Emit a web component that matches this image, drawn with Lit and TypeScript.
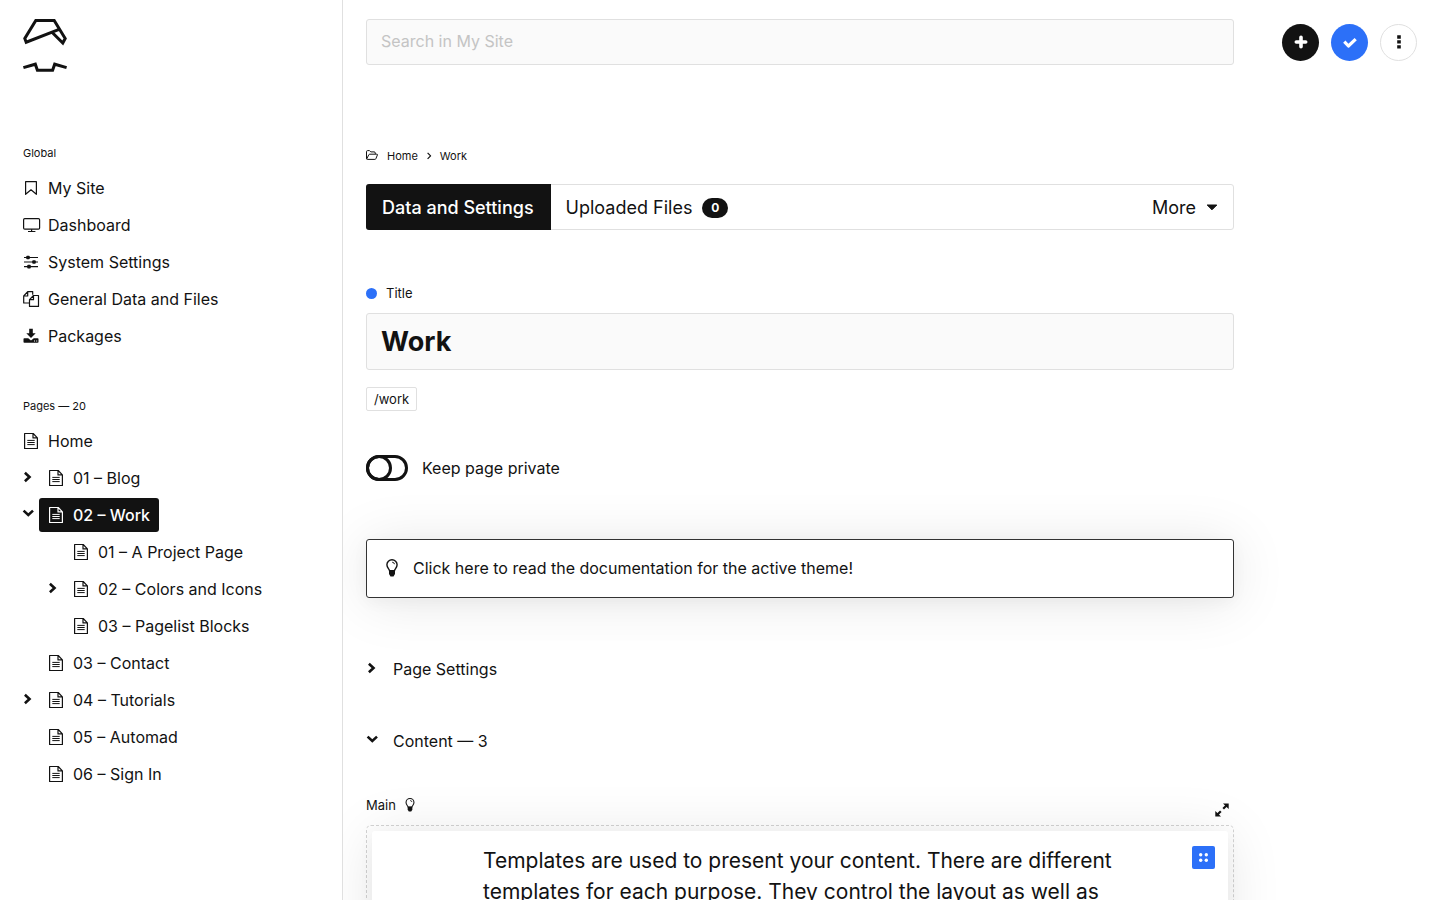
import { LitElement, css, html, svg, nothing } from "lit";
import type { SVGTemplateResult, TemplateResult } from "lit";
import { customElement, state } from "lit/decorators.js";
import { classMap } from "lit/directives/class-map.js";

interface PageNode {
  label: string;
  active?: boolean;
  collapsed?: boolean;
  children?: PageNode[];
}

const icon = (w: number, h: number, body: SVGTemplateResult) => html`
  <svg width=${w} height=${h} viewBox="0 0 ${w} ${h}" fill="none" stroke="currentColor"
    stroke-linejoin="round" aria-hidden="true">${body}</svg>`;

const icons = {
  logo: () => icon(44, 53, svg`
    <g stroke-width="3" stroke-linejoin="miter">
      <path d="M28.500 12.800 L39.800 24 L42.200 19.500 L31.200 1.500 H12.800 L1.800 19.500 L3.200 23.200 L36.800 10.200"/>
      <path d="M.4 48.600 L12.300 45.200 L14.400 51.300 H29.600 L31.700 45.200 L43.600 48.600"/>
    </g>`),
  bookmark: () => icon(16, 16, svg`<path d="M2.600 1.700h10.800v12.600L8 9.800l-5.400 4.500z" stroke-width="1.200"/>`),
  monitor: () => icon(18, 16, svg`
    <rect x=".6" y="1.600" width="16" height="10.600" rx="1.200" stroke-width="1.200"/><path d="M8.600 12.200v2M5 14.500h7.400" stroke-width="1.200"/>`),
  sliders: () => icon(16, 16, svg`
    <path d="M1 3.500h14M1 8h14M1 12.600h14" stroke-width="1.200"/>
    <g fill="currentColor" stroke="none"><rect x="3.200" y="1.700" width="3.600" height="3.600" rx="1"/>
    <rect x="9.200" y="6.200" width="3.600" height="3.600" rx="1"/><rect x="4.200" y="10.800" width="3.600" height="3.600" rx="1"/></g>`),
  files: () => icon(16, 16, svg`
    <path d="M6 12H.7V5L4.700.6h5v3.200M4.700.6V5H.7" stroke-width="1.200"/>
    <path d="M6.500 15.400V8.700l4-4.200h5v10.900zM10.500 4.500v4.200h-4" stroke-width="1.200"/>`),
  download: () => icon(16, 16, svg`
    <g fill="currentColor" stroke="none">
      <path d="M6.200.8h3.600v4.500h2.900L8 9.900 3.300 5.300h2.900z"/>
      <path fill-rule="evenodd" d="M1.300 10.200h3.900L8 12.600l2.800-2.400h3.900q.8 0 .8.800v3q0 .8-.8.800H1.300q-.8 0-.8-.8v-3q0-.8.8-.8zM11 12.600v1h1v-1zM13.200 12.600v1h1v-1z"/>
    </g>`),
  page: () => icon(16, 18, svg`
    <path d="M1.600 1.500h8.600l4.200 4.300v10.700H1.600zM10 1.600v4.300h4.300" stroke-width="1.200"/>
    <path d="M4.300 8.400h7.400M4.300 10.500h7.400M4.300 12.600h7.400"/>`),
  right: () => icon(12, 14, svg`<path d="M1.900 1.800 6.500 6l-4.600 4.200" stroke-width="2.600" stroke-linejoin="miter"/>`),
  down: () => icon(12, 14, svg`<path d="M.6 2.600 5.300 6.900l4.700-4.300" stroke-width="2.600" stroke-linejoin="miter"/>`),
  plus: () => icon(14, 14, svg`<path d="M7 2.300v9.400M2.300 7h9.400" stroke-width="3.600" stroke-linecap="round"/>`),
  check: () => icon(16, 14, svg`<path d="m2.300 6.700 4.100 4.300 7.300-6.900" stroke-width="3.200"/>`),
  dots: () => icon(4, 14, svg`<path d="M.2 2h3.600M.2 6.900h3.600M.2 11.800h3.600" stroke-width="3.300"/>`),
  folder: () => icon(12, 12, svg`
    <path d="M.5 8.700V1.700Q.5.600 1.600.600h1.900l1.300 1.300h3.300q1.200 0 1.200 1.200v.9M.7 9l2-4.100q.3-.7 1-.7h7.100q.9 0 .6.8L9.900 8.700q-.3.700-1 .7H1.300q-.8 0-.8-.8"/>`),
  crumb: () => icon(4, 8, svg`<path d="m.6.800 3 3-3 3" stroke-width="1.200"/>`),
  caret: () => icon(12, 7, svg`<path d="M1.200 1h9.600L6 5.800z" fill="currentColor" stroke-width="1"/>`),
  bulb: (w: number, h: number) => html`
    <svg width=${w} height=${h} viewBox="0 0 12 18" fill="none" stroke="currentColor" aria-hidden="true">
      <path d="M3.500 11.600C3.200 9.800.9 8.800.9 5.800a5.100 5.100 0 0 1 10.200 0c0 3-2.300 4-2.600 5.800z" stroke-width="1.400"/>
      <path d="M6.200 3.200q2 .1 2.300 2"/>
      <path d="M3 11.300h6v3.800L7.500 17.500h-3L3 15.100z" fill="currentColor" stroke="none"/>
    </svg>`,
  expand: () => icon(14, 14, svg`
    <path d="M2.500 11.500 5.800 8.200M8.200 5.800l3.300-3.300" stroke-width="2.200"/>
    <path d="M8 .4h5.700v5.700zM.3 7.900v5.700H6z" fill="currentColor" stroke="none"/>`),
  grip: () => icon(11, 11, svg`
    <g fill="currentColor" stroke="none"><circle cx="2.700" cy="2.700" r="1.700"/><circle cx="8.300" cy="2.700" r="1.700"/>
    <circle cx="2.700" cy="8.300" r="1.700"/><circle cx="8.300" cy="8.300" r="1.700"/></g>`),
};

const globalLinks: [string, () => TemplateResult][] = [
  ["My Site", icons.bookmark],
  ["Dashboard", icons.monitor],
  ["System Settings", icons.sliders],
  ["General Data and Files", icons.files],
  ["Packages", icons.download],
];

const pages: PageNode[] = [
  { label: "01 – Blog", collapsed: true, children: [] },
  {
    label: "02 – Work",
    active: true,
    children: [
      { label: "01 – A Project Page" },
      { label: "02 – Colors and Icons", collapsed: true, children: [] },
      { label: "03 – Pagelist Blocks" },
    ],
  },
  { label: "03 – Contact" },
  { label: "04 – Tutorials", collapsed: true, children: [] },
  { label: "05 – Automad" },
  { label: "06 – Sign In" },
];

const base = css`
  *, *::before, *::after { box-sizing: border-box; }
  svg { display: block; flex: none; overflow: visible; }
  a { color: inherit; text-decoration: none; }
  button, input { font: inherit; color: inherit; margin: 0; }
  button { background: none; border: 0; padding: 0; cursor: pointer; }
  button, input { font-optical-sizing: none; }
  ul, ol { list-style: none; margin: 0; padding: 0; }
`;

@customElement("side-nav")
class SideNav extends LitElement {
  static styles = [base, css`
    :host { display: block; padding: 19px 14px; border-right: 1px solid #e0e0e0; overflow: hidden; }
    .logo { display: block; width: max-content; margin: 0 9px 73px; }
    .heading { margin: 0 9px 10px; font-size: 11px; line-height: 16px; font-weight: 400; }
    .section + .section { margin-top: 45px; }
    .list { display: flex; flex-direction: column; gap: 3px; }
    .row { display: flex; align-items: center; height: 34px; }
    .tree { padding-left: 9px; }
    .sub { padding-left: 25px; padding-top: 3px; }
    .toggle, .spacer { width: 16px; height: 16px; flex: none; }
    .toggle { display: flex; align-items: center; }
    .link { display: flex; align-items: center; gap: 9px; height: 34px; padding: 0 9px; border-radius: 3px; white-space: nowrap; }
    .glyph { display: flex; width: 16px; }
    .active { background: #121212; color: #fff; font-weight: 500; }
  `];

  private node(page: PageNode): TemplateResult {
    return html`<li>
      <div class="row">
        ${page.children
          ? html`<button class="toggle" aria-label="Toggle ${page.label}" aria-expanded=${page.collapsed ? "false" : "true"}>
              ${page.collapsed ? icons.right() : icons.down()}</button>`
          : html`<span class="spacer"></span>`}
        <a href="#" class=${classMap({ link: true, active: !!page.active })}>
          <span class="glyph">${icons.page()}</span>${page.label}</a>
      </div>
      ${page.children?.length
        ? html`<ul class="list sub">${page.children.map((c) => this.node(c))}</ul>`
        : nothing}
    </li>`;
  }

  render() {
    return html`
      <a class="logo" href="#" aria-label="Automad">${icons.logo()}</a>
      <nav class="section">
        <h2 class="heading">Global</h2>
        <ul class="list">
          ${globalLinks.map(([label, glyph]) => html`
            <li><a class="link" href="#"><span class="glyph">${glyph()}</span>${label}</a></li>`)}
        </ul>
      </nav>
      <nav class="section">
        <h2 class="heading">Pages — 20</h2>
        <ul class="list">
          <li><a class="link" href="#"><span class="glyph">${icons.page()}</span>Home</a></li>
          <li><ul class="list tree">${pages.map((p) => this.node(p))}</ul></li>
        </ul>
      </nav>`;
  }
}

@customElement("app-root")
export class AppRoot extends LitElement {
  @state() private keepPrivate = false;

  static styles = [base, css`
    :host {
      display: grid; grid-template-columns: 343px minmax(0, 1fr); height: 100vh; overflow: hidden;
      font: 400 16px/24px Inter, sans-serif; font-optical-sizing: none; color: #121212; background: #fff;
    }
    .main {
      display: grid; grid-template-columns: minmax(0, 1fr) auto; grid-template-rows: auto 1fr; column-gap: 48px;
      padding: 19px 23px 0; overflow: auto; scrollbar-width: none;
    }
    .search {
      width: 100%; height: 46px; padding: 0 14px 2px; border: 1px solid #e0e0e0; border-radius: 3px;
      background: #fafafa; outline: none;
    }
    .search::placeholder { color: #c4c4c4; opacity: 1; }
    .actions { display: flex; align-items: center; gap: 12px; }
    .round {
      display: flex; align-items: center; justify-content: center; width: 37px; height: 37px;
      border-radius: 50%; background: #121212; color: #fff;
    }
    .save { background: #2c70f8; }
    .menu { background: #fff; color: #121212; border: 1px solid #e0e0e0; }
    .content { padding-top: 83px; }
    .crumbs { display: flex; align-items: center; gap: 9px; font-size: 11px; line-height: 16px; }
    .tabs {
      display: flex; height: 46px; margin-top: 20px; border: 1px solid #e0e0e0; border-radius: 3px;
      font-size: 18px;
    }
    .tab { display: flex; align-items: center; gap: 10px; padding: 1px 15px 0; }
    .current { margin: -1px 0 -1px -1px; padding: 1px 17px 0 16px; background: #121212; color: #fff; font-weight: 500; border-radius: 3px 0 0 3px; }
    .more { margin-left: auto; }
    .badge {
      width: 26px; height: 20px; border-radius: 10px; background: #121212; color: #fff;
      font-size: 12px; line-height: 20px; font-weight: 700; text-align: center;
    }
    .label { display: flex; align-items: center; gap: 9px; font-size: 13px; line-height: 16px; }
    .title-label { margin-top: 55px; }
    .dot { width: 11px; height: 11px; border-radius: 50%; background: #2c70f8; }
    .title {
      display: block; width: 100%; height: 57px; margin-top: 12px; padding: 0 14px; border: 1px solid #e0e0e0;
      border-radius: 3px; background: #fafafa; font-size: 27px; font-weight: 700; outline: none;
    }
    .slug {
      display: inline-block; margin-top: 17px; padding: 0 7px; border: 1px solid #e0e0e0; border-radius: 2px;
      font-size: 13px; line-height: 22px; vertical-align: top;
    }
    .private { display: flex; align-items: center; gap: 14px; width: max-content; margin-top: 44px; cursor: pointer; }
    .switch {
      appearance: none; width: 42px; height: 26px; margin: 0; border: 3px solid #121212; border-radius: 13px;
      display: flex; align-items: center;
    }
    .switch::before {
      content: ""; width: 26px; height: 26px; flex: none; margin-left: -3px; border: 3px solid #121212; border-radius: 50%;
    }
    .switch:checked::before { margin-left: 13px; }
    .docs {
      display: flex; align-items: center; gap: 15px; height: 59px; margin-top: 58px; padding: 0 19px 2px;
      border: 1px solid #333; border-radius: 3px; background: #fff;
      box-shadow: 0 4px 16px rgba(0, 0, 0, .04), 0 4px 56px rgba(0, 0, 0, .1);
    }
    .fold { display: flex; align-items: center; gap: 14px; width: 100%; height: 24px; padding-left: 1px; text-align: left; }
    .first { margin-top: 59px; }
    .second { margin-top: 48px; }
    .editor-head { display: flex; justify-content: space-between; height: 20px; margin-top: 44px; padding-right: 5px; }
    .editor-head .label { height: 16px; }
    .full { align-self: flex-end; }
    .editor { margin-top: 8px; padding: 5px; border: 1px dashed #d4d4d4; border-radius: 5px; }
    .paper {
      display: grid; grid-template-columns: 1fr minmax(0, 634px) 1fr; min-height: 240px; padding: 14px 13px;
      border-radius: 3px; background: #fff;
      box-shadow: 0 4px 16px rgba(0, 0, 0, .04), 0 4px 56px rgba(0, 0, 0, .1);
    }
    .text { grid-column: 2; margin: 0; font-size: 21px; line-height: 31px; }
    .grip {
      grid-column: 3; justify-self: end; display: flex; align-items: center; justify-content: center;
      width: 23px; height: 23px; margin-top: 1px; border-radius: 2px; background: #2c70f8; color: #fff;
    }
  `];

  render() {
    return html`
      <side-nav></side-nav>
      <main class="main">
        <input class="search" type="search" placeholder="Search in My Site" aria-label="Search in My Site">
        <div class="actions">
          <button class="round" aria-label="Add page">${icons.plus()}</button>
          <button class="round save" aria-label="Publish">${icons.check()}</button>
          <button class="round menu" aria-label="Menu">${icons.dots()}</button>
        </div>
        <div class="content">
          <nav class="crumbs" aria-label="Breadcrumb">
            ${icons.folder()}<a href="#">Home</a>${icons.crumb()}<a href="#">Work</a>
          </nav>
          <div class="tabs">
            <button class="tab current">Data and Settings</button>
            <button class="tab">Uploaded Files <span class="badge">0</span></button>
            <button class="tab more">More ${icons.caret()}</button>
          </div>
          <label class="label title-label" for="title"><span class="dot"></span>Title</label>
          <input class="title" id="title" type="text" value="Work">
          <a class="slug" href="#">/work</a>
          <label class="private">
            <input class="switch" type="checkbox" .checked=${this.keepPrivate}
              @change=${() => (this.keepPrivate = !this.keepPrivate)}>
            Keep page private
          </label>
          <a class="docs" href="#">${icons.bulb(12, 18)}Click here to read the documentation for the active theme!</a>
          <button class="fold first" aria-expanded="false">${icons.right()}Page Settings</button>
          <button class="fold second" aria-expanded="true">${icons.down()}Content — 3</button>
          <div class="editor-head">
            <span class="label">Main ${icons.bulb(10, 14)}</span>
            <button class="full" aria-label="Full screen">${icons.expand()}</button>
          </div>
          <div class="editor">
            <div class="paper">
              <p class="text">Templates are used to present your content. There are different templates for each purpose. They control the layout as well as</p>
              <button class="grip" aria-label="Block options">${icons.grip()}</button>
            </div>
          </div>
        </div>
      </main>`;
  }
}
